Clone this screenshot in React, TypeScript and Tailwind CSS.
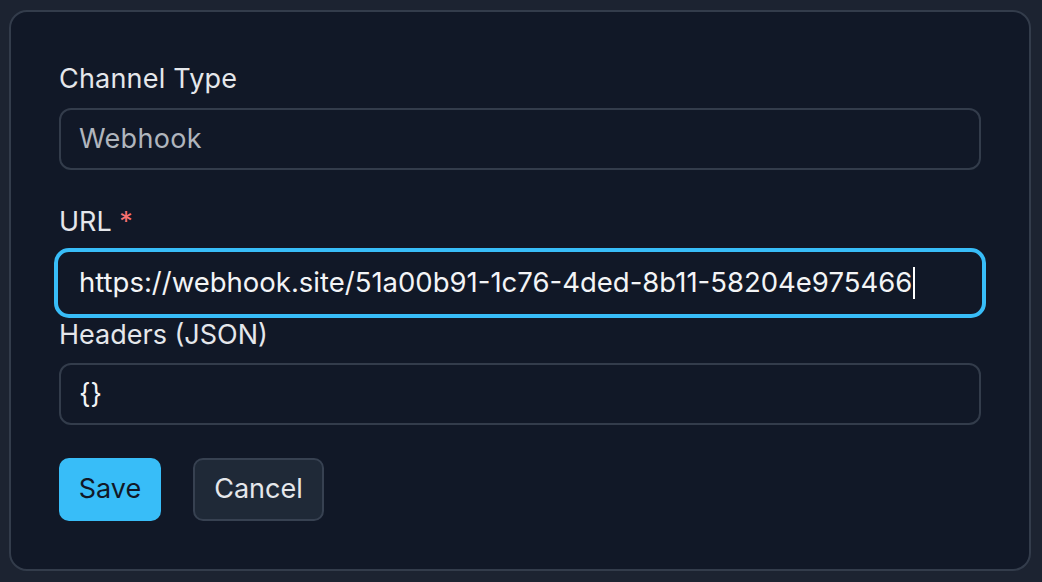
export default function App() {
  return (
    <div className="w-[1042px] h-[582px] bg-[#1c2331] pt-[10px] pl-[9px] font-['Inter',sans-serif]">
      <div className="w-[1022px] h-[561px] bg-[#111827] border-2 border-[#333c4b] rounded-[18px] pt-[51px] pl-[48px] pr-[48px]">
        {/* Channel type */}
        <label className="block text-[27px] leading-[32px] tracking-[0.2px] text-[#e5e7eb] mb-[13px]">Channel Type</label>
        <div className="h-[62px] w-[922px] border-2 border-[#333c4b] rounded-[12px] flex items-center px-[18px] text-[27px] tracking-[0.3px] text-[#b0b5bd]">
          Webhook
        </div>

        {/* URL */}
        <label className="block mt-[36px] text-[27px] leading-[32px] text-[#e5e7eb] mb-[10px]">
          URL <span className="text-[#f87171]">*</span>
        </label>
        <div className="h-[70px] w-[932px] -ml-[5px] border-4 border-[#38bdf8] rounded-[15px] flex items-center pl-[21px] text-[27.5px] text-[#f3f4f6]">
          <span>https://webhook.site/51a00b91-1c76-4ded-8b11-58204e975466</span>
          <span className="inline-block w-[2px] h-[32px] bg-white ml-[1px]" />
        </div>

        {/* Headers */}
        <label className="block mt-[1px] text-[27px] leading-[32px] text-[#e5e7eb] mb-[12px]">Headers (JSON)</label>
        <div className="h-[62px] w-[922px] border-2 border-[#333c4b] rounded-[12px] flex items-center px-[18px] text-[27px] text-[#f3f4f6]">
          {'{}'}
        </div>

        {/* Actions */}
        <div className="flex gap-[32px] mt-[33px]">
          <button className="w-[102px] h-[63px] rounded-[10px] bg-[#38bdf8] text-[#111827] text-[27px]">Save</button>
          <button className="w-[131px] h-[63px] rounded-[10px] bg-[#1f2937] border-2 border-[#374151] text-[#e5e7eb] text-[27px]">
            Cancel
          </button>
        </div>
      </div>
    </div>
  )
}
